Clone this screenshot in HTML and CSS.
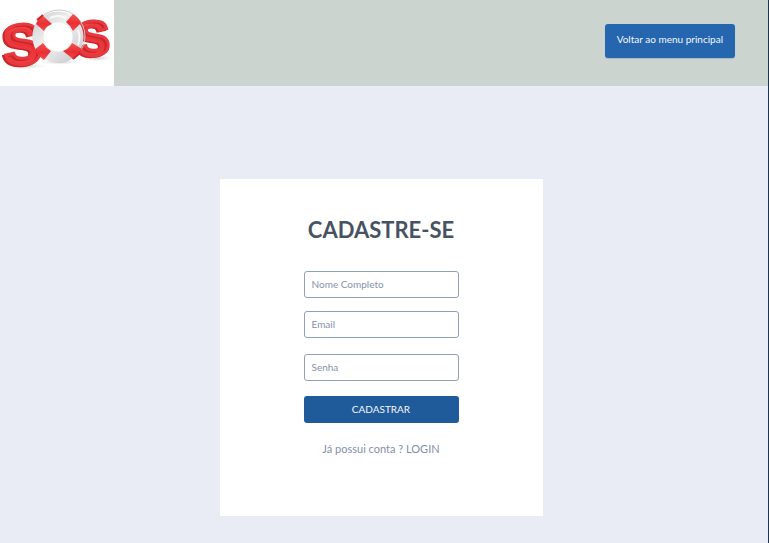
FILE: index.html
```html
<!DOCTYPE html>
<html lang="pt-BR">
<head>
<meta charset="utf-8">
<meta name="viewport" content="width=device-width, initial-scale=1">
<title>Cadastre-se</title>
<link rel="stylesheet" href="styles.css">
</head>
<body>
<header class="topbar">
  <svg class="logo" viewBox="0 0 114 86" role="img" aria-label="SOS">
    <defs>
      <linearGradient id="red" x1="0" y1="0" x2="0" y2="1">
        <stop offset="0" stop-color="#f65350"/>
        <stop offset="0.55" stop-color="#e92f34"/>
        <stop offset="1" stop-color="#f04a49"/>
      </linearGradient>
      <linearGradient id="ring" x1="0" y1="0" x2="1" y2="1">
        <stop offset="0" stop-color="#d4d4d6"/>
        <stop offset="0.45" stop-color="#f3f3f4"/>
        <stop offset="1" stop-color="#cbcbce"/>
      </linearGradient>
      <radialGradient id="shade">
        <stop offset="0" stop-color="#aaa" stop-opacity="0.7"/>
        <stop offset="1" stop-color="#fff" stop-opacity="0"/>
      </radialGradient>
    </defs>
    <rect width="114" height="86" fill="#fff"/>
    <ellipse cx="24" cy="66" rx="26" ry="4" fill="url(#shade)"/>
    <ellipse cx="60" cy="62" rx="24" ry="3" fill="url(#shade)"/>
    <ellipse cx="97" cy="58" rx="18" ry="4" fill="url(#shade)"/>
    <text class="letter" x="77" y="55" font-size="49" transform="rotate(-3 96 38)">S</text>
    <text class="letter" x="3" y="64" font-size="57" transform="rotate(-5 22 43)">S</text>
    <circle cx="59" cy="36" r="26" fill="none" stroke="#c9c9cc" stroke-width="1"/>
    <circle cx="58" cy="37" r="20" fill="none" stroke="url(#ring)" stroke-width="11"/>
    <g fill="url(#red)">
      <path d="M38 20 42 15 52 24Q46 26 44 31L36 24Z"/>
      <path d="M66 22 73 14Q79 18 81 23L73 31Q70 25 66 22Z"/>
      <path d="M43 43Q46 48 51 51L44 60Q38 56 34 50Z"/>
      <path d="M63 51Q70 48 72 43L82 49Q80 55 73 59Z"/>
    </g>
    <path d="M37 20 43 15M73 59 80 53" fill="none" stroke="#c9252b" stroke-width="2"/>
    <path d="M50 18Q58 14 66 18M78 30Q81 37 78 45" fill="none" stroke="#fff" stroke-width="2" opacity=".8"/>
  </svg>
  <button class="btn btn-menu" type="button">Voltar ao menu principal</button>
</header>
<main class="page">
  <form class="card">
    <h1 class="title">CADASTRE-SE</h1>
    <input class="field" type="text" placeholder="Nome Completo" aria-label="Nome Completo">
    <input class="field field-spaced" type="email" placeholder="Email" aria-label="Email">
    <input class="field" type="password" placeholder="Senha" aria-label="Senha">
    <button class="btn btn-submit" type="button">CADASTRAR</button>
    <p class="login">Já possui conta ? <a href="#">LOGIN</a></p>
  </form>
</main>
</body>
</html>
```
FILE: styles.css
```css
* {
  box-sizing: border-box;
}

body {
  margin: 0;
  min-height: 100vh;
  background: #e9ecf5;
  border-right: 1px solid #20344c;
  font-family: Lato, sans-serif;
}

.topbar {
  display: flex;
  justify-content: space-between;
  align-items: flex-start;
  padding-right: 33px;
  background: #cbd4cf;
}

.logo {
  display: block;
  width: 114px;
  height: 86px;
}

.letter {
  font-family: "Liberation Sans", sans-serif;
  font-weight: bold;
  fill: url(#red);
  stroke: #e83a3e;
  stroke-width: 3px;
  text-shadow: -2px 1px #c9252b;
}

.btn {
  border: 0;
  border-radius: 3px;
  color: #f4f8fc;
  font-family: inherit;
  font-size: 10px;
  line-height: 16px;
  cursor: pointer;
}

.btn-menu {
  margin-top: 24px;
  padding: 7px 12px 11px;
  background: #2566af;
  box-shadow: 0 1px 1px #a9b9c2;
}

.page {
  display: flex;
  justify-content: center;
  padding: 93px 6px 27px 0;
}

.card {
  display: flex;
  flex-direction: column;
  align-items: center;
  width: 323px;
  padding: 36px 20px 59px;
  background: #fff;
}

.title {
  margin: 0 0 26px;
  color: #475362;
  font-size: 22px;
  line-height: 30px;
}

.field,
.btn-submit {
  width: 155px;
  height: 27px;
}

.field {
  margin-bottom: 13px;
  padding: 0 7px 1px;
  border: 1px solid #929fb5;
  border-radius: 3px;
  background: #fff;
  color: #475362;
  font-family: inherit;
  font-size: 10px;
}

.field-spaced {
  margin-bottom: 16px;
}

.field::placeholder {
  color: #8593aa;
  opacity: 1;
}

.btn-submit {
  margin-top: 2px;
  padding: 0 0 2px;
  background: #1f5b9b;
}

.login {
  margin: 18px 0 0;
  color: #8090a7;
  font-size: 11px;
  line-height: 16px;
}

.login a {
  color: inherit;
  text-decoration: none;
}
```
